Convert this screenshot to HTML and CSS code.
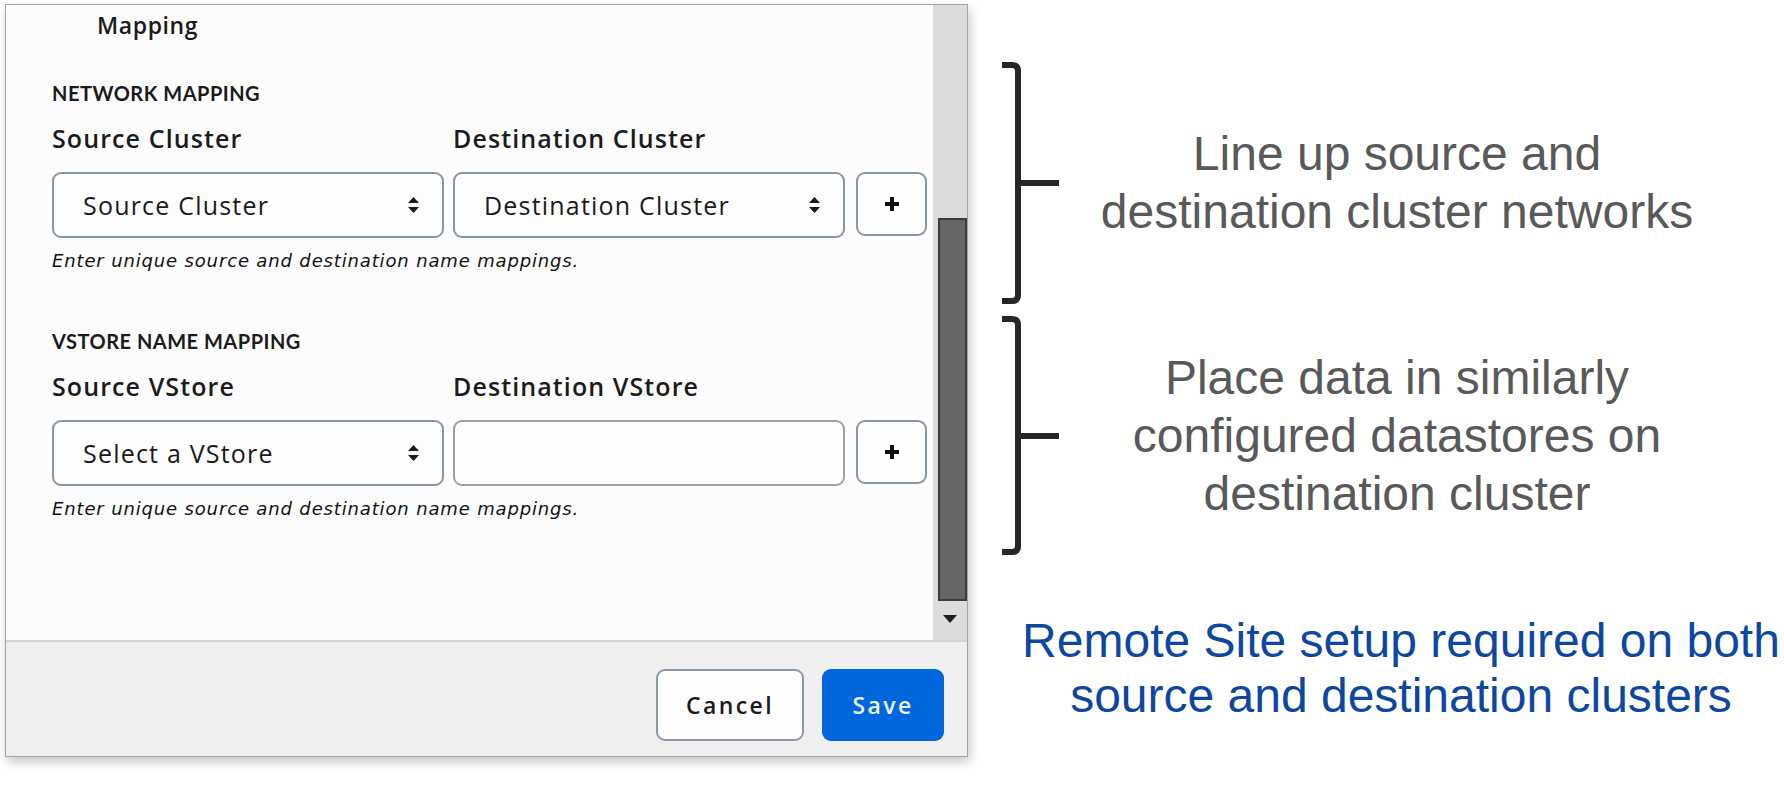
FILE: index.html
```html
<!DOCTYPE html>
<html lang="en">
<head>
<meta charset="utf-8">
<title>Mapping</title>
<link rel="stylesheet" href="styles.css">
</head>
<body>
<div class="page">
  <div class="dialog">
    <div class="scroll">
      <div class="content">
        <div class="title">Mapping</div>

        <section class="mapping">
          <div class="heading">NETWORK MAPPING</div>
          <div class="labels">
            <div class="label">Source Cluster</div>
            <div class="label">Destination Cluster</div>
          </div>
          <div class="row">
            <div class="select">
              <span>Source Cluster</span>
              <svg class="updown" width="11" height="16" viewBox="0 0 11 16"><path d="M5.5 0 L11 6 H0 Z M0 10 H11 L5.5 16 Z" fill="#1a1a1a"/></svg>
            </div>
            <div class="select">
              <span>Destination Cluster</span>
              <svg class="updown" width="11" height="16" viewBox="0 0 11 16"><path d="M5.5 0 L11 6 H0 Z M0 10 H11 L5.5 16 Z" fill="#1a1a1a"/></svg>
            </div>
            <div class="add">
              <svg width="16" height="16" viewBox="0 0 16 16"><path d="M8 1 V15 M1 8 H15" stroke="#111" stroke-width="4"/></svg>
            </div>
          </div>
          <div class="hint">Enter unique source and destination name mappings.</div>
        </section>

        <section class="mapping">
          <div class="heading">VSTORE NAME MAPPING</div>
          <div class="labels">
            <div class="label">Source VStore</div>
            <div class="label">Destination VStore</div>
          </div>
          <div class="row">
            <div class="select">
              <span>Select a VStore</span>
              <svg class="updown" width="11" height="16" viewBox="0 0 11 16"><path d="M5.5 0 L11 6 H0 Z M0 10 H11 L5.5 16 Z" fill="#1a1a1a"/></svg>
            </div>
            <div class="input"></div>
            <div class="add">
              <svg width="16" height="16" viewBox="0 0 16 16"><path d="M8 1 V15 M1 8 H15" stroke="#111" stroke-width="4"/></svg>
            </div>
          </div>
          <div class="hint">Enter unique source and destination name mappings.</div>
        </section>
      </div>
      <div class="scrollbar">
        <div class="thumb"></div>
        <div class="arrow"></div>
      </div>
    </div>
    <div class="footer">
      <button class="btn cancel">Cancel</button>
      <button class="btn save">Save</button>
    </div>
  </div>

  <div class="notes">
    <div class="note note-1">
      <svg class="brace" width="70" height="242" viewBox="0 0 70 242">
        <path d="M7 3 H17 Q23 3 23 9 V233 Q23 239 17 239 H7 M23 121 H64" fill="none" stroke="#262626" stroke-width="6"/>
      </svg>
      <p class="note-text">Line up source and<br>destination cluster networks</p>
    </div>
    <div class="note note-2">
      <svg class="brace" width="70" height="239" viewBox="0 0 70 239">
        <path d="M7 3 H17 Q23 3 23 9 V230 Q23 236 17 236 H7 M23 120 H64" fill="none" stroke="#262626" stroke-width="6"/>
      </svg>
      <p class="note-text">Place data in similarly<br>configured datastores on<br>destination cluster</p>
    </div>
    <p class="remote">Remote Site setup required on both<br>source and destination clusters</p>
  </div>
</div>
</body>
</html>
```

FILE: styles.css
```css
* { box-sizing: border-box; }

html, body {
  margin: 0;
  padding: 0;
  background: #ffffff;
}

.page {
  display: flex;
  align-items: flex-start;
  width: 1784px;
  height: 785px;
  overflow: hidden;
}

/* ---------- dialog ---------- */
.dialog {
  margin: 4px 0 0 5px;
  width: 963px;
  height: 753px;
  border: 1px solid #a3a3a3;
  display: flex;
  flex-direction: column;
  box-shadow: 2px 5px 10px rgba(0, 0, 0, 0.22);
  background: #efefef;
}

.scroll {
  display: flex;
  height: 635px;
  flex: none;
}

.content {
  flex: 1;
  background: #fcfcfc;
  padding: 5px 0 0 46px;
  font-family: "Open Sans", "Lato", sans-serif;
  color: #1b1b1b;
}

.title {
  font-size: 23px;
  line-height: 30px;
  font-weight: 600;
  letter-spacing: 0.6px;
  padding-left: 45px;
}

.mapping {
  margin-top: 41px;
}
.mapping + .mapping {
  margin-top: 57px;
}

.heading {
  font-family: "Lato", sans-serif;
  font-size: 20px;
  line-height: 24px;
  font-weight: 700;
  letter-spacing: 0.5px;
}

.labels {
  display: flex;
  margin-top: 18px;
}
.label {
  width: 401px;
  font-size: 25px;
  line-height: 30px;
  font-weight: 600;
  letter-spacing: 1.1px;
}

.row {
  display: flex;
  margin-top: 19px;
  height: 66px;
}

.select,
.input {
  width: 392px;
  height: 66px;
  border: 2px solid #8797a4;
  border-radius: 9px;
  background: #fdfdfd;
}
.select {
  display: flex;
  align-items: center;
  justify-content: space-between;
  padding: 0 23px 0 29px;
  font-size: 25px;
  letter-spacing: 1.2px;
  color: #1a1a1a;
}
.select + .select,
.select + .input {
  margin-left: 9px;
}
.input {
  border-color: #a0a0a0;
}
.updown { flex: none; }

.add {
  width: 71px;
  height: 64px;
  margin-left: 11px;
  border: 2px solid #8797a4;
  border-radius: 9px;
  display: flex;
  align-items: center;
  justify-content: center;
  background: #fdfdfd;
}

.hint {
  margin-top: 12px;
  font-family: "DejaVu Sans", sans-serif;
  font-style: italic;
  font-size: 18px;
  line-height: 22px;
  letter-spacing: 0.85px;
  color: #111;
}

/* ---------- scrollbar ---------- */
.scrollbar {
  width: 34px;
  flex: none;
  background: #dcdcdc;
  display: flex;
  flex-direction: column;
  align-items: center;
}
.thumb {
  margin-top: 213px;
  width: 29px;
  height: 383px;
  background: #666666;
  border: 2px solid #3c3c3c;
  margin-left: 5px;
}
.arrow {
  margin-top: 14px;
  width: 0;
  height: 0;
  border-left: 7px solid transparent;
  border-right: 7px solid transparent;
  border-top: 8px solid #1e1e1e;
}

/* ---------- footer ---------- */
.footer {
  flex: 1;
  border-top: 2px solid #d3d3d3;
  background: #efefef;
  display: flex;
  justify-content: flex-end;
  align-items: flex-start;
  gap: 18px;
  padding: 27px 23px 0 0;
}
.btn {
  height: 72px;
  border-radius: 9px;
  font-family: "Open Sans", sans-serif;
  font-size: 23px;
  font-weight: 600;
  letter-spacing: 2.4px;
  cursor: pointer;
}
.cancel {
  width: 148px;
  background: #fdfdfd;
  border: 2px solid #8a99a5;
  color: #1a1a1a;
}
.save {
  width: 122px;
  background: #0066dc;
  border: none;
  color: #eaf5ff;
}

/* ---------- annotations ---------- */
.notes {
  flex: 1;
  display: flex;
  flex-direction: column;
  margin-top: 62px;
  font-family: "Liberation Sans", Arial, sans-serif;
}
.note {
  display: flex;
  align-items: center;
  padding-left: 27px;
}
.note-2 {
  margin-top: 12px;
}
.brace {
  flex: none;
  display: block;
}
.note-text {
  margin: 0;
  width: 664px;
  text-align: center;
  font-size: 48px;
  line-height: 58px;
  color: #595959;
}
.remote {
  margin: 58px 0 0 0;
  padding-left: 50px;
  text-align: center;
  font-size: 48px;
  line-height: 55px;
  color: #0d47a1;
}
```
